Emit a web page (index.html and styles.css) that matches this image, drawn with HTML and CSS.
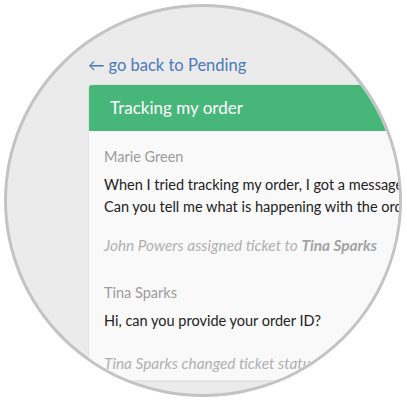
FILE: index.html
```html
<!DOCTYPE html>
<html lang="en">
<head>
    <meta charset="UTF-8">
    <meta name="viewport" content="width=device-width, initial-scale=1.0">
    <title>Ticket - Tracking my order</title>
    <link rel="stylesheet" href="styles.css">
</head>
<body>
    <div class="lens">
        <div class="page">
            <a class="back-link" href="#"><span class="arrow">&larr;</span>go back to Pending</a>

            <div class="ticket">
                <div class="ticket-header">Tracking my order</div>

                <div class="ticket-body">
                    <div class="message">
                        <div class="author">Marie Green</div>
                        <p class="text">When I tried tracking my order, I got a message saying it was not found.<br>Can you tell me what is happening with the order?</p>
                    </div>

                    <div class="event">John Powers assigned ticket to <strong>Tina Sparks</strong></div>

                    <div class="message">
                        <div class="author">Tina Sparks</div>
                        <p class="text">Hi, can you provide your order ID?</p>
                    </div>

                    <div class="event last">Tina Sparks changed ticket status from Pending to Open</div>
                </div>
            </div>
        </div>
    </div>
</body>
</html>
```

FILE: styles.css
```css
/* styles.css */
body {
    margin: 0;
    background-color: #fff;
    font-family: Lato, "Open Sans", sans-serif;
}

.lens {
    box-sizing: border-box;
    width: 398px;
    height: 393px;
    margin: 4px 0 0 4px;
    border: 3px solid #c3c3c3;
    border-radius: 50%;
    overflow: hidden;
    background-color: #ebebeb;
}

.page {
    padding: 45px 0 0 81px;
    width: 420px;
}

.back-link {
    display: block;
    color: #4a7ab9;
    font-size: 16.5px;
    line-height: 26px;
    text-decoration: none;
    white-space: nowrap;
}

.arrow {
    margin-right: 4px;
}

.ticket {
    margin-top: 6px;
    border: 1px solid #e2e2e2;
    border-radius: 3px;
    background-color: #f9f9f9;
}

.ticket-header {
    background-color: #47b779;
    color: #fff;
    font-size: 17px;
    line-height: 46px;
    padding-left: 21px;
    border-radius: 3px 3px 0 0;
}

.ticket-body {
    padding: 15px 0 0 15px;
    white-space: nowrap;
}

.author {
    color: #9b9b9b;
    font-size: 14.5px;
    line-height: 22px;
}

.text {
    margin: 6px 0 0;
    color: #222;
    font-size: 14.5px;
    line-height: 22px;
}

.event {
    margin: 16px 0 26px;
    color: #b0b0b0;
    font-size: 15.4px;
    font-style: italic;
    line-height: 22px;
}

.event strong {
    color: #a3a3a3;
}

.event.last {
    margin: 20px 0 0;
    padding-bottom: 6px;
    border-bottom: 1px solid #e6e6e6;
}
```
